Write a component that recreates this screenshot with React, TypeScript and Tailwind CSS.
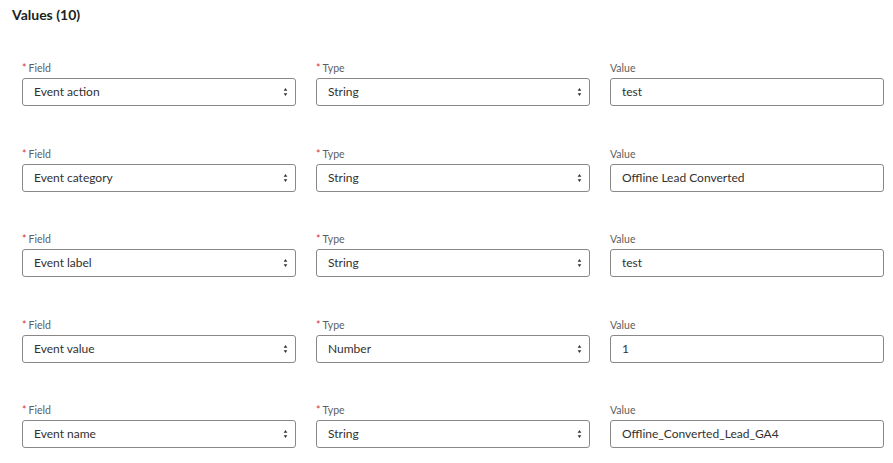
import React from "react";

type Row = { field: string; type: string; value: string };

const rows: Row[] = [
  { field: "Event action", type: "String", value: "test" },
  { field: "Event category", type: "String", value: "Offline Lead Converted" },
  { field: "Event label", type: "String", value: "test" },
  { field: "Event value", type: "Number", value: "1" },
  { field: "Event name", type: "String", value: "Offline_Converted_Lead_GA4" },
];

function Label({ text, required }: { text: string; required?: boolean }) {
  return (
    <div className="mb-[3px] flex h-[13px] items-center text-[10.5px] leading-none text-[#605e5c]">
      {required && <span className="mr-[2px] text-[#d13438]">*</span>}
      <span>{text}</span>
    </div>
  );
}

function Spinner() {
  return (
    <svg width="5" height="12" viewBox="0 0 5 12" className="shrink-0">
      <path d="M2.5 2 L4.3 4.8 L0.7 4.8 Z" fill="#323130" />
      <path d="M2.5 10 L4.3 7.2 L0.7 7.2 Z" fill="#323130" />
    </svg>
  );
}

function SelectBox({ text }: { text: string }) {
  return (
    <div className="flex h-[28px] items-center justify-between rounded-[3px] border border-[#8a8886] bg-white pl-[11px] pr-[7px] text-[12px] text-[#323130]">
      <span>{text}</span>
      <Spinner />
    </div>
  );
}

function InputBox({ text }: { text: string }) {
  return (
    <div className="flex h-[28px] items-center rounded-[3px] border border-[#8a8886] bg-white px-[11px] text-[12px] text-[#323130]">
      {text}
    </div>
  );
}

export default function App() {
  return (
    <div
      className="h-[463px] w-[893px] overflow-hidden bg-white"
      style={{ fontFamily: 'Lato, "Open Sans", sans-serif' }}
    >
      <div className="px-[12px] pt-[4px] text-[14px] font-bold text-[#201f1e]">
        Values (10)
      </div>
      <div className="mt-[37px] flex flex-col gap-[41.5px] pl-[22px]">
        {rows.map((r) => (
          <div key={r.field} className="grid grid-cols-[274px_274px_274px] gap-x-[20px]">
            <div className="flex flex-col">
              <Label text="Field" required />
              <SelectBox text={r.field} />
            </div>
            <div className="flex flex-col">
              <Label text="Type" required />
              <SelectBox text={r.type} />
            </div>
            <div className="flex flex-col">
              <Label text="Value" />
              <InputBox text={r.value} />
            </div>
          </div>
        ))}
      </div>
    </div>
  );
}
